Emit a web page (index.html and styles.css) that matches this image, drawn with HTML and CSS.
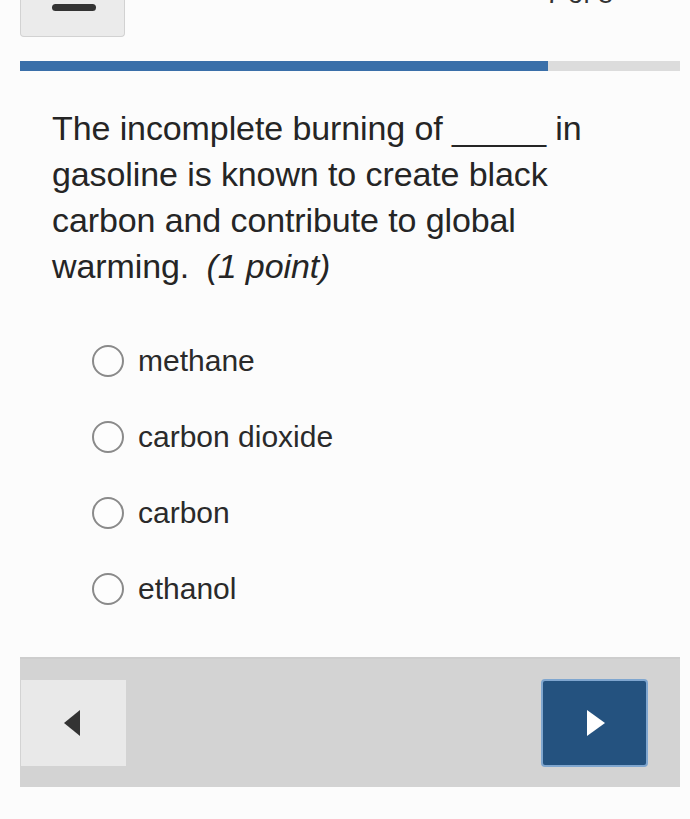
FILE: index.html
```html
<!DOCTYPE html>
<html lang="en">
<head>
<meta charset="utf-8">
<title>Question</title>
<link rel="stylesheet" href="styles.css">
</head>
<body>
<div class="page">
  <header class="top">
    <div class="collapse-btn"><span class="minus"></span></div>
    <div class="counter">7 of 8</div>
  </header>
  <div class="progress"><div class="progress-fill" style="width: 80%"></div></div>

  <p class="question">The incomplete burning of _____ in gasoline is known to create black carbon and contribute to global warming. <em class="points">(1 point)</em></p>

  <ul class="options">
    <li class="option"><span class="radio"></span><span class="label">methane</span></li>
    <li class="option"><span class="radio"></span><span class="label">carbon dioxide</span></li>
    <li class="option"><span class="radio"></span><span class="label">carbon</span></li>
    <li class="option"><span class="radio"></span><span class="label">ethanol</span></li>
  </ul>

  <nav class="nav-bar">
    <div class="nav-btn prev"><span class="tri-left"></span></div>
    <div class="nav-btn next"><span class="tri-right"></span></div>
  </nav>
</div>
</body>
</html>
```

FILE: styles.css
```css
html, body {
  margin: 0;
  padding: 0;
}
body {
  background: #fcfcfc;
  font-family: "Liberation Sans", Arial, Helvetica, sans-serif;
  color: #262626;
}
.page {
  padding: 0 10px 0 20px;
}
.top {
  display: flex;
  justify-content: space-between;
  align-items: flex-start;
  height: 38px;
}
.collapse-btn {
  width: 105px;
  height: 37px;
  box-sizing: border-box;
  background: #ebebeb;
  border: 1px solid #d2d2d2;
  border-top: none;
  border-radius: 0 0 4px 4px;
  display: flex;
  justify-content: center;
  padding-top: 4px;
}
.minus {
  display: block;
  width: 44px;
  height: 7px;
  background: #333;
  border-radius: 4px;
  margin-left: 2px;
}
.counter {
  font-size: 27px;
  line-height: 26px;
  margin-top: -19px;
  margin-right: 67px;
  color: #333;
}
.progress {
  margin-top: 23px;
  width: 660px;
  height: 10px;
  background: #dcdcdc;
}
.progress-fill {
  height: 100%;
  background: #3a6fa9;
}
.question {
  margin: 34px 0 0 32px;
  width: 560px;
  font-size: 34px;
  line-height: 46px;
  color: #252525;
  letter-spacing: -0.1px;
}
.points {
  display: inline-block;
  font-style: italic;
  margin-left: 8px;
  padding-right: 3px;
}
.options {
  list-style: none;
  margin: 34px 0 0 72px;
  padding: 0;
}
.option {
  display: flex;
  align-items: center;
  height: 76px;
}
.radio {
  width: 32px;
  height: 32px;
  box-sizing: border-box;
  border: 2.5px solid #8a8a8a;
  border-radius: 50%;
  background: #fdfdfd;
  flex: none;
}
.label {
  margin-left: 14px;
  font-size: 30px;
  color: #2a2a2a;
}
.nav-bar {
  margin-top: 30px;
  width: 660px;
  height: 130px;
  box-sizing: border-box;
  background: #d3d3d3;
  border-top: 2px solid #cdcdcd;
  display: flex;
  justify-content: space-between;
  align-items: center;
  padding: 0 32px 0 1px;
}
.nav-btn {
  display: flex;
  justify-content: center;
  align-items: center;
  box-sizing: border-box;
}
.prev {
  width: 105px;
  height: 86px;
  background: #e9e9e9;
}
.next {
  width: 107px;
  height: 88px;
  background: #24527f;
  border: 2px solid #7fa6cf;
  border-radius: 4px;
}
.tri-left {
  width: 0;
  height: 0;
  border-top: 13px solid transparent;
  border-bottom: 13px solid transparent;
  border-right: 16px solid #333;
  margin-left: -4px;
}
.tri-right {
  width: 0;
  height: 0;
  border-top: 13px solid transparent;
  border-bottom: 13px solid transparent;
  border-left: 18px solid #fff;
  margin-left: 2px;
}
```
